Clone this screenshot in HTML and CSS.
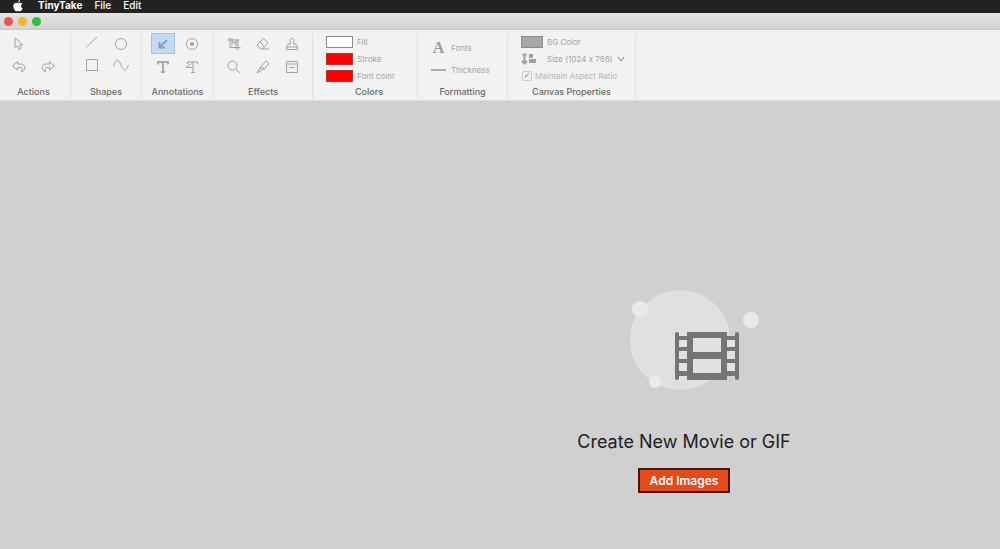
FILE: index.html
```html
<!DOCTYPE html>
<html lang="en">
<head>
    <meta charset="UTF-8">
    <meta name="viewport" content="width=device-width, initial-scale=1.0">
    <title>TinyTake</title>
    <link rel="stylesheet" href="styles.css">
</head>
<body>
    <nav class="menubar">
        <button class="apple" aria-label="Apple menu">
            <svg width="10" height="12" viewBox="0 0 10 12"><path fill="currentColor" d="M7 0C7 1.500 6.100 2.500 4.900 2.600 4.800 1.300 5.900.200 7 0zM5.200 3.300C5.700 3.300 6.300 2.800 7.200 2.800 8 2.800 8.900 3.200 9.400 3.900 7.500 5 7.800 7.500 9.700 8.300 9.200 9.700 8.200 11.300 7.100 11.300 6.400 11.300 6.100 10.900 5.300 10.900 4.500 10.900 4.100 11.300 3.500 11.300 2 11.300.300 8.500.300 6.300.300 4.100 1.700 2.800 3.100 2.800 4 2.800 4.700 3.300 5.200 3.300z"/></svg>
        </button>
        <button class="app-name">TinyTake</button>
        <button>File</button>
        <button>Edit</button>
    </nav>
    <header class="titlebar">
        <button class="light close" aria-label="Close"></button>
        <button class="light minimize" aria-label="Minimize"></button>
        <button class="light zoom" aria-label="Zoom"></button>
    </header>
    <div class="toolbar">
        <section class="group actions">
            <div class="tools">
                <button class="tool" aria-label="Select"><svg viewBox="0 0 16 16"><path d="M4 2v10l2.500-2 1.500 3.500 2-1L8.500 9h3.500z"/></svg></button>
                <span></span>
                <button class="tool" aria-label="Undo"><svg viewBox="0 0 16 16"><path d="M6.500 2.500 1.500 7l5 4V8.500H9c2 0 2.500 1.500 1.500 4.500 5-2 4.500-8-1-8H6.500z"/></svg></button>
                <button class="tool" aria-label="Redo"><svg viewBox="0 0 16 16"><path d="M9.500 2.500 14.500 7l-5 4V8.500H7c-2 0-2.500 1.500-1.500 4.500-5-2-4.500-8 1-8h3z"/></svg></button>
            </div>
            <h2>Actions</h2>
        </section>
        <section class="group shapes">
            <div class="tools">
                <button class="tool" aria-label="Line"><svg viewBox="0 0 16 16"><path d="M2.500 11 13 1"/></svg></button>
                <button class="tool" aria-label="Ellipse"><svg viewBox="0 0 16 16"><circle cx="8" cy="8" r="5.500"/></svg></button>
                <button class="tool" aria-label="Rectangle"><svg viewBox="0 0 16 16"><path d="M2.500 0.500h11v11h-11z"/></svg></button>
                <button class="tool" aria-label="Curve"><svg viewBox="0 0 16 16"><path d="M.500 7C3-.500 5.500-.500 8 6s5 7 7.500 0"/></svg></button>
            </div>
            <h2>Shapes</h2>
        </section>
        <section class="group annotations">
            <div class="tools">
                <button class="tool selected" aria-label="Arrow"><svg viewBox="0 0 16 16"><path d="M12 4 5 11M4.500 6v5.500H10"/></svg></button>
                <button class="tool" aria-label="Step"><svg viewBox="0 0 16 16"><circle cx="8" cy="8" r="5.500"/><circle class="solid" cx="8" cy="8" r="2"/></svg></button>
                <button class="tool" aria-label="Text"><svg class="bold" viewBox="0 0 16 16"><path d="M3 5.500V3h10v2.500M8 3v10M6 13h4"/></svg></button>
                <button class="tool" aria-label="Callout text"><svg viewBox="0 0 16 16"><path d="M3.500 5V3h10v2M9 3v10.500M7 13.500h4M2 8.500h7M2 8.500l5.500-4"/></svg></button>
            </div>
            <h2>Annotations</h2>
        </section>
        <section class="group effects">
            <div class="tools">
                <button class="tool" aria-label="Crop"><svg viewBox="0 0 16 16"><path d="M1.500 4h10.500v10M4 1.500v10h10.500M6 2v7.500M6 6h4v7M8 8l5-5"/></svg></button>
                <button class="tool" aria-label="Erase"><svg viewBox="0 0 16 16"><path d="m2 9 6.500-6.500L13 7l-5.500 6H5.500zM5 6l4.500 4.500M7.500 13H14"/></svg></button>
                <button class="tool" aria-label="Stamp"><svg viewBox="0 0 16 16"><path d="M6.500 8 6 4.500C5.500 1.500 10.500 1.500 10 4.500L9.500 8H12l1.500 3v2.500h-11V11L4 8zM3 11h10"/></svg></button>
                <button class="tool" aria-label="Magnify"><svg viewBox="0 0 16 16"><circle cx="6.500" cy="6.500" r="4.500"/><path d="m10 10 4 4"/></svg></button>
                <button class="tool" aria-label="Highlight"><svg viewBox="0 0 16 16"><path d="M6 7.500 11 2l3 2.500L9.500 10l-3 .500L5 9zM5 9l-3 5L7 11M6 7.500l3.500 2.500"/></svg></button>
                <button class="tool" aria-label="Blur"><svg viewBox="0 0 16 16"><path d="M2.500 2.500h11v11h-11zM2.500 5h11M5.500 8.500h5"/></svg></button>
            </div>
            <h2>Effects</h2>
        </section>
        <section class="group colors">
            <div class="rows">
                <button class="row"><span class="swatch fill"></span>Fill</button>
                <button class="row"><span class="swatch red"></span>Stroke</button>
                <button class="row"><span class="swatch red"></span>Font color</button>
            </div>
            <h2>Colors</h2>
        </section>
        <section class="group formatting">
            <div class="rows">
                <button class="row"><span class="font-mark">A</span>Fonts</button>
                <button class="row"><span class="thick-mark"></span>Thickness</button>
            </div>
            <h2>Formatting</h2>
        </section>
        <section class="group canvas-props">
            <div class="rows">
                <button class="row"><span class="swatch gray"></span>BG Color</button>
                <div class="row">
                    <svg class="size-icon" viewBox="0 0 16 12"><path class="stem" d="M3.500 1v9M1 8l2.500 2.500L6 8M1.500 1.500h4"/><path class="solid" d="M8 1h4v4H8zM8 6h7v4H8z"/></svg>
                    <select aria-label="Canvas size"><option>Size (1024 x 788)</option></select>
                    <svg class="chevron" viewBox="0 0 8 8"><path d="m1 2 3 4 3-4"/></svg>
                </div>
                <label class="row ratio"><input type="checkbox" checked>Maintain Aspect Ratio</label>
            </div>
            <h2>Canvas Properties</h2>
        </section>
    </div>
    <main class="canvas">
        <div class="empty">
            <svg class="film" width="132" height="104" viewBox="0 0 132 104">
                <circle cx="52" cy="52" r="50" fill="#e0e0e0"/>
                <circle cx="12" cy="21" r="8" fill="#e9e9e9"/>
                <circle cx="123" cy="32" r="8" fill="#e9e9e9"/>
                <circle cx="27" cy="94" r="6" fill="#ebebeb"/>
                <path fill="#e2e2e2" d="M48 48h62v38H48z"/>
                <path fill="#757575" fill-rule="evenodd" d="M47 45q2-2 4 0v3h8v-4h40v4h8v-3q2-2 4 0v46q-2 2-4 0v-3h-8v4H59v-4h-8v3q-2 2-4 0zM51 52v7h8v-7zM51 63v8h8v-8zM51 75v8h8v-8zM99 52v7h8v-7zM99 63v8h8v-8zM99 75v8h8v-8zM65 50v14h28V50zM65 71v14h28V71z"/>
            </svg>
            <h1>Create New Movie or GIF</h1>
            <button class="add">Add Images</button>
        </div>
    </main>
</body>
</html>
```

FILE: styles.css
```css
* {
    box-sizing: border-box;
}
body {
    display: flex;
    flex-direction: column;
    min-height: 100vh;
    margin: 0;
    background-color: #d0d0d0;
    font-family: Inter, "Liberation Sans", sans-serif;
    font-variant-ligatures: no-contextual;
}
button {
    padding: 0;
    border: none;
    background: none;
    color: inherit;
    font: inherit;
}
h1, h2 {
    margin: 0;
}
.menubar {
    display: flex;
    align-items: center;
    gap: 12px;
    height: 13px;
    padding: 0 13px 2px;
    background-color: #222;
    color: white;
    font-size: 10px;
    font-weight: 500;
    line-height: 11px;
}
.menubar .apple {
    display: flex;
    margin-right: 3px;
}
.menubar .app-name {
    font-weight: 700;
}
.titlebar {
    display: flex;
    align-items: center;
    gap: 5px;
    height: 17px;
    padding: 0 4px;
    background: linear-gradient(#e4e4e4, #d2d2d2);
    border-bottom: 1px solid #c8c8c8;
}
.light {
    width: 9px;
    height: 9px;
    border-radius: 50%;
}
.close { background-color: #f4504d; }
.minimize { background-color: #f3b827; }
.zoom { background-color: #28c138; }
.toolbar {
    display: flex;
    height: 71px;
    padding: 3px 0 1px;
    background-color: #f2f2f2;
    border-bottom: 1px solid #dcdcdc;
}
.group {
    display: flex;
    flex-direction: column;
    align-items: center;
    border-right: 1px solid #e2e2e2;
}
.group h2 {
    color: #6a6a6a;
    font-size: 9px;
    font-weight: 500;
    line-height: 15px;
    white-space: nowrap;
}
.actions { width: 71px; padding-right: 3px; }
.shapes { width: 71px; }
.annotations { width: 72px; }
.effects { width: 99px; }
.colors { width: 105px; }
.formatting { width: 90px; }
.canvas-props { width: 128px; }
.colors h2 {
    padding-left: 8px;
}
.tools {
    display: grid;
    grid-template-columns: repeat(2, 24px);
    grid-auto-rows: 21px;
    flex-shrink: 0;
    gap: 2px 5px;
    height: 51px;
}
.effects .tools {
    grid-template-columns: repeat(3, 24px);
}
.tool {
    display: flex;
    align-items: center;
    justify-content: center;
    border: 1px solid transparent;
}
.tool svg {
    width: 16px;
    height: 16px;
}
.toolbar svg {
    fill: none;
    stroke: #a0a0a0;
}
.toolbar svg .solid {
    fill: #a0a0a0;
    stroke: none;
}
.toolbar svg.bold {
    stroke: #aaa;
    stroke-width: 2;
}
.tool.selected {
    background-color: #c2daf2;
    border-color: #9fc4e8;
}
.tool.selected svg {
    stroke: #8b9eb2;
    stroke-width: 2;
}
.rows {
    display: flex;
    flex-direction: column;
    flex-shrink: 0;
    width: 100%;
    height: 51px;
    padding-left: 13px;
}
.row {
    display: flex;
    align-items: center;
    gap: 4px;
    height: 17px;
    color: #a2a2a2;
    font-size: 8px;
    line-height: 12px;
    white-space: nowrap;
}
.swatch {
    width: 27px;
    height: 12px;
    border: 1px solid #8c8c8c;
}
.fill { background-color: white; }
.red { background-color: #fe0000; border-color: #c03030; }
.gray { width: 22px; background-color: #a6a6a6; }
.formatting .rows {
    padding-top: 4px;
}
.formatting .row {
    height: 22px;
    gap: 5px;
}
.font-mark {
    width: 15px;
    color: #999;
    font-family: "Liberation Serif", serif;
    font-size: 16px;
    font-weight: 700;
    text-align: center;
}
.thick-mark {
    width: 15px;
    border-top: 2px solid #aaa;
}
.size-icon {
    width: 16px;
    height: 12px;
    margin-right: 6px;
}
.size-icon .stem {
    stroke-width: 2;
}
select {
    appearance: none;
    padding: 0;
    border: none;
    background: none;
    color: #a2a2a2;
    font: inherit;
}
.chevron {
    width: 8px;
    height: 8px;
}
.row .chevron {
    stroke: #777;
}
.ratio {
    gap: 3px;
    color: #b4b4b4;
}
.ratio input {
    appearance: none;
    display: grid;
    place-items: center;
    width: 10px;
    height: 10px;
    margin: 0 0 0 1px;
    border: 1px solid #ccc;
    border-radius: 2px;
}
.ratio input:checked::before {
    content: "✓";
    color: #777;
    font-family: "DejaVu Sans", sans-serif;
    font-size: 8px;
    line-height: 8px;
}
.canvas {
    flex: 1;
    padding: 187px 0 56px 368px;
}
.empty {
    display: flex;
    flex-direction: column;
    align-items: center;
}
.film {
    margin-left: 20px;
}
.empty h1 {
    margin: 36px 0 12px;
    color: #202020;
    font-size: 18px;
    font-weight: 400;
    line-height: 28px;
}
.add {
    padding: 0 10px;
    background-color: #e64a19;
    border: 2px solid #40180c;
    color: white;
    font-size: 12px;
    font-weight: 600;
    line-height: 21px;
}
```
